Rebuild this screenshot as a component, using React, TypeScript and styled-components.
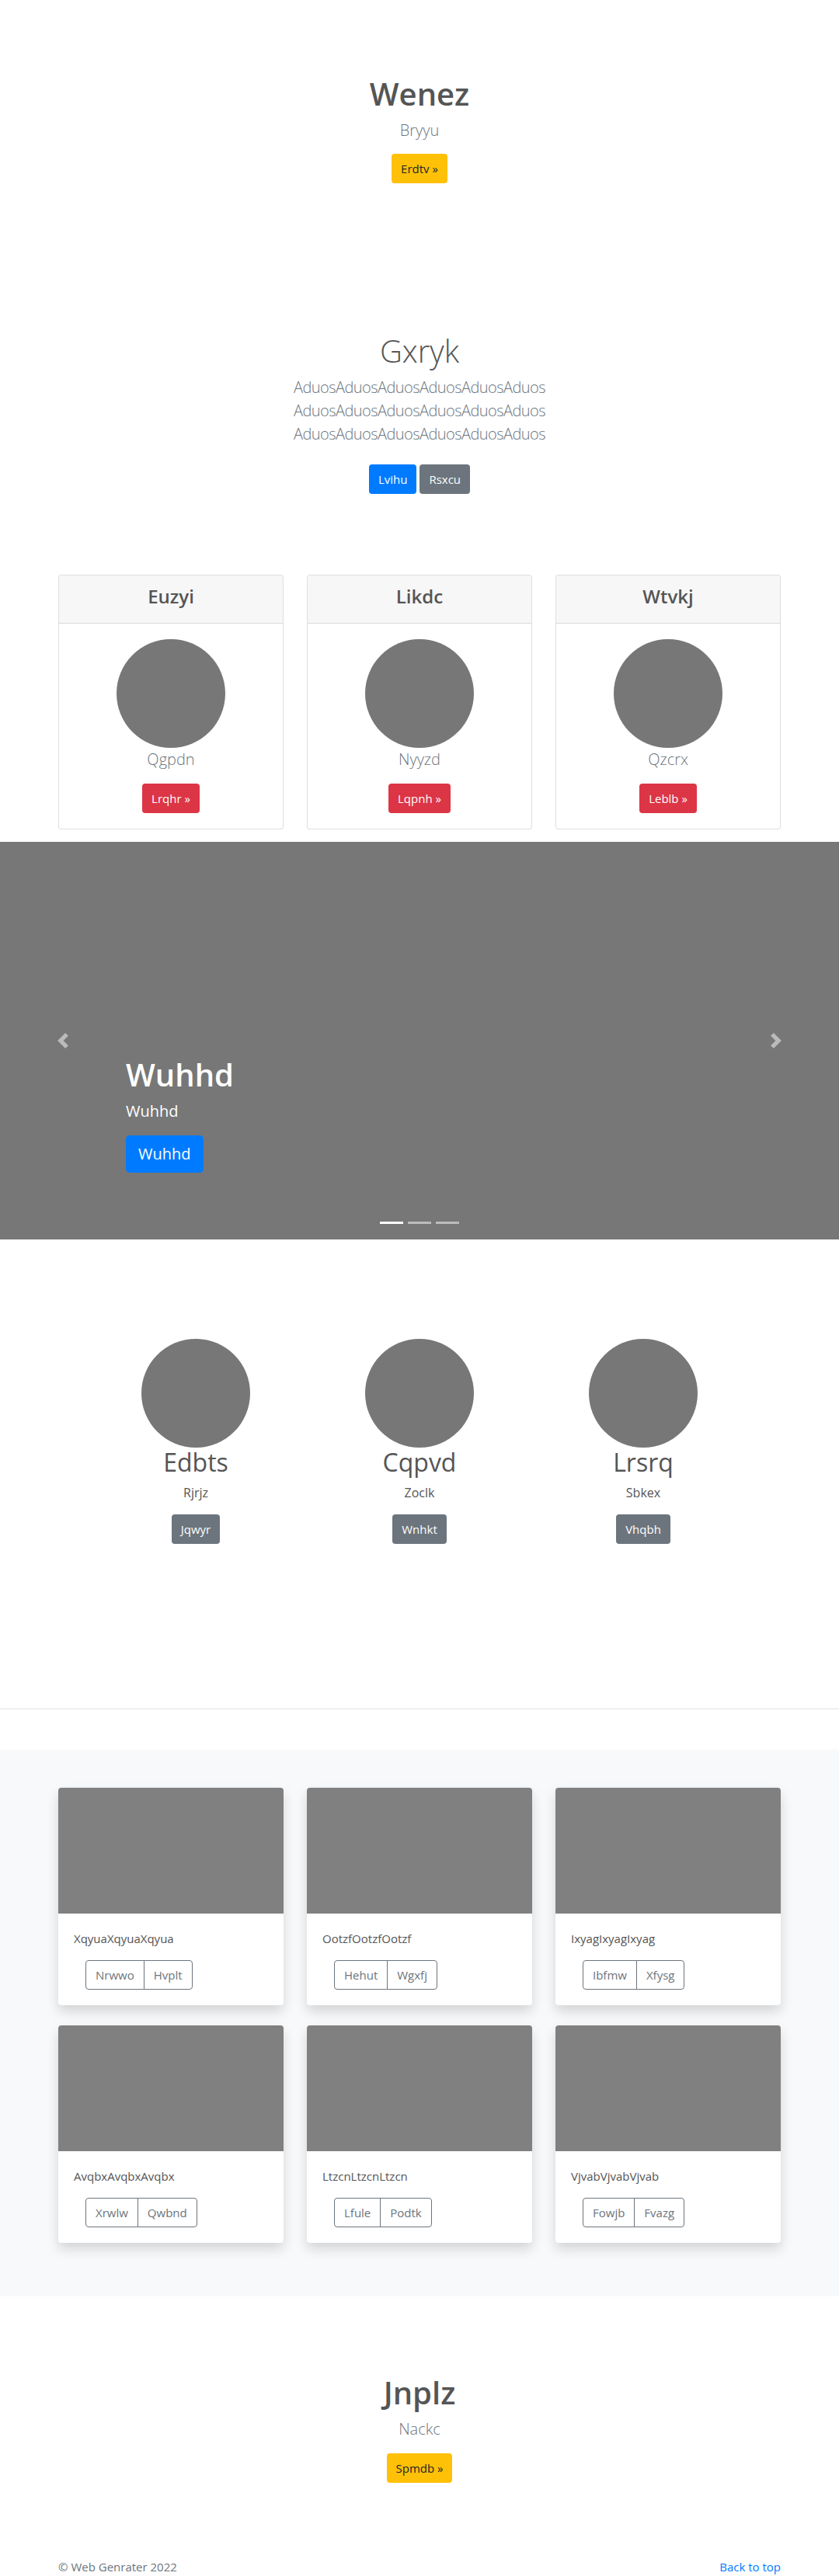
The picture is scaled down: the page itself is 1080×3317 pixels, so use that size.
import React from "react";
import styled, { createGlobalStyle, css } from "styled-components";

const GlobalStyle = createGlobalStyle`
  * { box-sizing: border-box; }
  html, body { margin: 0; padding: 0; background: #fff; }
  body {
    font-family: "Open Sans", "Noto Sans", sans-serif;
    font-size: 16px;
    line-height: 1.5;
    color: #555;
  }
`;

type Variant = "warning" | "primary" | "secondary" | "danger";

const variantColors: Record<Variant, { bg: string; fg: string }> = {
  warning: { bg: "#ffc107", fg: "#212529" },
  primary: { bg: "#007bff", fg: "#fff" },
  secondary: { bg: "#6c757d", fg: "#fff" },
  danger: { bg: "#dc3545", fg: "#fff" },
};

const Button = styled.a<{ $variant: Variant; $large?: boolean }>`
  display: inline-flex;
  align-items: center;
  justify-content: center;
  height: ${(p) => (p.$large ? "48px" : "38px")};
  padding: ${(p) => (p.$large ? "0 16px" : "0 12px")};
  font-size: ${(p) => (p.$large ? "20px" : "15px")};
  font-weight: 400;
  border-radius: ${(p) => (p.$large ? "5px" : "4px")};
  background: ${(p) => variantColors[p.$variant].bg};
  color: ${(p) => variantColors[p.$variant].fg};
  text-decoration: none;
  white-space: nowrap;
`;

const Hero = styled.section<{ $top: number; $bottom: number }>`
  padding: ${(p) => p.$top}px 15px ${(p) => p.$bottom}px;
  text-align: center;
`;

const Title = styled.h1<{ $weight?: number }>`
  margin: 0 0 8px;
  font-size: 40px;
  line-height: 48px;
  font-weight: ${(p) => p.$weight ?? 600};
  color: #555;
`;

const Lead = styled.p<{ $mb?: number }>`
  margin: 0 0 ${(p) => p.$mb ?? 16}px;
  font-size: 20px;
  line-height: 30px;
  font-weight: 300;
  color: #6c757d;
`;

const WrapLead = styled(Lead)`
  max-width: 420px;
  margin-left: auto;
  margin-right: auto;
  letter-spacing: -0.55px;
`;

const ButtonRow = styled.div`
  display: flex;
  justify-content: center;
  gap: 4px;
  padding-top: 8px;
`;

const Container = styled.div<{ $width: number }>`
  width: ${(p) => p.$width}px;
  margin: 0 auto;
`;

const ThreeGrid = styled.div<{ $colGap: number; $rowGap?: number }>`
  display: grid;
  grid-template-columns: repeat(3, 1fr);
  column-gap: ${(p) => p.$colGap}px;
  row-gap: ${(p) => p.$rowGap ?? 0}px;
`;

const PricingSection = styled.section`
  padding-bottom: 16px;
`;

const PricingCard = styled.div`
  border: 1px solid rgba(0, 0, 0, 0.125);
  border-radius: 4px;
  background: #fff;
  text-align: center;
  overflow: hidden;
`;

const CardHeader = styled.div`
  background: #f7f7f7;
  border-bottom: 1px solid rgba(0, 0, 0, 0.125);
  padding: 12px 20px 20px;
`;

const CardTitle = styled.h4`
  margin: 0;
  font-size: 24px;
  line-height: 29px;
  font-weight: 600;
  color: #555;
`;

const CardBody = styled.div`
  padding: 20px;
  display: flex;
  flex-direction: column;
  align-items: center;
`;

const Avatar = styled.div`
  width: 140px;
  height: 140px;
  border-radius: 50%;
  background: #777;
  flex: none;
`;

const Carousel = styled.section`
  position: relative;
  height: 512px;
  background: #777;
  overflow: hidden;
`;

const Control = styled.a<{ $side: "left" | "right" }>`
  position: absolute;
  top: 0;
  bottom: 0;
  ${(p) => (p.$side === "left" ? css`left: 0;` : css`right: 0;`)}
  width: 15%;
  display: flex;
  align-items: center;
  justify-content: center;
  opacity: 0.5;
`;

const Caption = styled.div`
  position: absolute;
  left: 15%;
  right: 15%;
  bottom: 50px;
  padding: 20px 0;
  color: #fff;
  display: flex;
  flex-direction: column;
  align-items: flex-start;
  z-index: 2;
`;

const CaptionTitle = styled.h1`
  margin: 0 0 8px;
  font-size: 40px;
  line-height: 48px;
  font-weight: 600;
  color: #fff;
`;

const CaptionText = styled.p`
  margin: 0 0 16px;
  font-size: 20px;
  line-height: 30px;
  font-weight: 400;
`;

const CaptionAction = styled.div`
  margin-bottom: 16px;
  display: flex;
`;

const Indicators = styled.ol`
  position: absolute;
  left: 0;
  right: 0;
  bottom: 10px;
  margin: 0;
  padding: 0;
  list-style: none;
  display: flex;
  justify-content: center;
`;

const Indicator = styled.li<{ $active?: boolean }>`
  width: 30px;
  height: 23px;
  margin: 0 3px;
  border-top: 10px solid transparent;
  border-bottom: 10px solid transparent;
  background: #fff;
  background-clip: padding-box;
  opacity: ${(p) => (p.$active ? 1 : 0.5)};
`;

const Marketing = styled.section`
  padding-top: 128px;
`;

const Feature = styled.div`
  display: flex;
  flex-direction: column;
  align-items: center;
  text-align: center;
`;

const FeatureTitle = styled.h2`
  margin: 0 0 8px;
  font-size: 32px;
  line-height: 38px;
  font-weight: 400;
  color: #555;
`;

const FeatureText = styled.p`
  margin: 0 0 16px;
  font-size: 16px;
  line-height: 24px;
  color: #555;
`;

const Divider = styled.hr`
  margin: 212px 0 52px;
  border: 0;
  border-top: 1px solid #e2e2e2;
`;

const Album = styled.section`
  background: #f8f9fa;
  padding: 49px 0 69px;
`;

const AlbumCard = styled.div`
  background: #fff;
  border-radius: 4px;
  overflow: hidden;
  box-shadow: 0 8px 16px rgba(0, 0, 0, 0.15);
`;

const Thumb = styled.div`
  height: 162px;
  background: #808080;
`;

const AlbumBody = styled.div`
  padding: 20px;
`;

const AlbumText = styled.p`
  margin: 0 0 16px;
  font-size: 15px;
  line-height: 24px;
  color: #555;
`;

const BtnGroup = styled.div`
  display: flex;
  margin-left: 15px;
`;

const OutlineBtn = styled.a<{ $pos: "first" | "last" }>`
  display: inline-flex;
  align-items: center;
  height: 38px;
  padding: 0 12px;
  font-size: 15px;
  color: #6c757d;
  border: 1px solid #6c757d;
  text-decoration: none;
  ${(p) =>
    p.$pos === "first"
      ? css`border-radius: 4px 0 0 4px;`
      : css`border-radius: 0 4px 4px 0; margin-left: -1px;`}
`;

const Footer = styled.footer`
  padding-top: 96px;
`;

const FooterRow = styled.div`
  display: flex;
  justify-content: space-between;
  font-size: 15px;
  line-height: 24px;
  color: #6c757d;
`;

const FooterLink = styled.a`
  color: #007bff;
  text-decoration: none;
`;

const Chevron = ({ dir }: { dir: "left" | "right" }) => (
  <svg width="20" height="20" viewBox="0 0 8 8" fill="#fff">
    {dir === "left" ? (
      <path d="M5.25 0l-4 4 4 4 1.5-1.5L4.25 4l2.5-2.5L5.25 0z" />
    ) : (
      <path d="M2.75 0l-1.5 1.5L3.75 4l-2.5 2.5L2.75 8l4-4-4-4z" />
    )}
  </svg>
);

const pricing = [
  { title: "Euzyi", name: "Qgpdn", btn: "Lrqhr »" },
  { title: "Likdc", name: "Nyyzd", btn: "Lqpnh »" },
  { title: "Wtvkj", name: "Qzcrx", btn: "Leblb »" },
];

const features = [
  { title: "Edbts", text: "Rjrjz", btn: "Jqwyr" },
  { title: "Cqpvd", text: "Zoclk", btn: "Wnhkt" },
  { title: "Lrsrq", text: "Sbkex", btn: "Vhqbh" },
];

const albums = [
  { text: "XqyuaXqyuaXqyua", a: "Nrwwo", b: "Hvplt" },
  { text: "OotzfOotzfOotzf", a: "Hehut", b: "Wgxfj" },
  { text: "IxyagIxyagIxyag", a: "Ibfmw", b: "Xfysg" },
  { text: "AvqbxAvqbxAvqbx", a: "Xrwlw", b: "Qwbnd" },
  { text: "LtzcnLtzcnLtzcn", a: "Lfule", b: "Podtk" },
  { text: "VjvabVjvabVjvab", a: "Fowjb", b: "Fvazg" },
];

export default function App() {
  return (
    <>
      <GlobalStyle />
      <Hero $top={97} $bottom={96}>
        <Title>Wenez</Title>
        <Lead $mb={15}>Bryyu</Lead>
        <Button $variant="warning">Erdtv »</Button>
      </Hero>

      <Hero $top={96} $bottom={104}>
        <Title $weight={300}>Gxryk</Title>
        <WrapLead>
          AduosAduosAduosAduosAduosAduos AduosAduosAduosAduosAduosAduos AduosAduosAduosAduosAduosAduos
        </WrapLead>
        <ButtonRow>
          <Button $variant="primary">Lvihu</Button>
          <Button $variant="secondary">Rsxcu</Button>
        </ButtonRow>
      </Hero>

      <PricingSection>
        <Container $width={930}>
          <ThreeGrid $colGap={30}>
            {pricing.map((p) => (
              <PricingCard key={p.title}>
                <CardHeader>
                  <CardTitle>{p.title}</CardTitle>
                </CardHeader>
                <CardBody>
                  <Avatar />
                  <Lead>{p.name}</Lead>
                  <Button $variant="danger">{p.btn}</Button>
                </CardBody>
              </PricingCard>
            ))}
          </ThreeGrid>
        </Container>
      </PricingSection>

      <Carousel>
        <Control $side="left">
          <Chevron dir="left" />
        </Control>
        <Control $side="right">
          <Chevron dir="right" />
        </Control>
        <Caption>
          <CaptionTitle>Wuhhd</CaptionTitle>
          <CaptionText>Wuhhd</CaptionText>
          <CaptionAction>
            <Button $variant="primary" $large>
              Wuhhd
            </Button>
          </CaptionAction>
        </Caption>
        <Indicators>
          <Indicator $active />
          <Indicator />
          <Indicator />
        </Indicators>
      </Carousel>

      <Marketing>
        <Container $width={864}>
          <ThreeGrid $colGap={0}>
            {features.map((f) => (
              <Feature key={f.title}>
                <Avatar />
                <FeatureTitle>{f.title}</FeatureTitle>
                <FeatureText>{f.text}</FeatureText>
                <Button $variant="secondary">{f.btn}</Button>
              </Feature>
            ))}
          </ThreeGrid>
        </Container>
      </Marketing>

      <Divider />

      <Album>
        <Container $width={930}>
          <ThreeGrid $colGap={30} $rowGap={26}>
            {albums.map((a) => (
              <AlbumCard key={a.text}>
                <Thumb />
                <AlbumBody>
                  <AlbumText>{a.text}</AlbumText>
                  <BtnGroup>
                    <OutlineBtn $pos="first">{a.a}</OutlineBtn>
                    <OutlineBtn $pos="last">{a.b}</OutlineBtn>
                  </BtnGroup>
                </AlbumBody>
              </AlbumCard>
            ))}
          </ThreeGrid>
        </Container>
      </Album>

      <Hero $top={100} $bottom={0}>
        <Title>Jnplz</Title>
        <Lead>Nackc</Lead>
        <Button $variant="warning">Spmdb »</Button>
      </Hero>

      <Footer>
        <Container $width={930}>
          <FooterRow>
            <span>© Web Genrater 2022</span>
            <FooterLink href="#">Back to top</FooterLink>
          </FooterRow>
        </Container>
      </Footer>
    </>
  );
}
